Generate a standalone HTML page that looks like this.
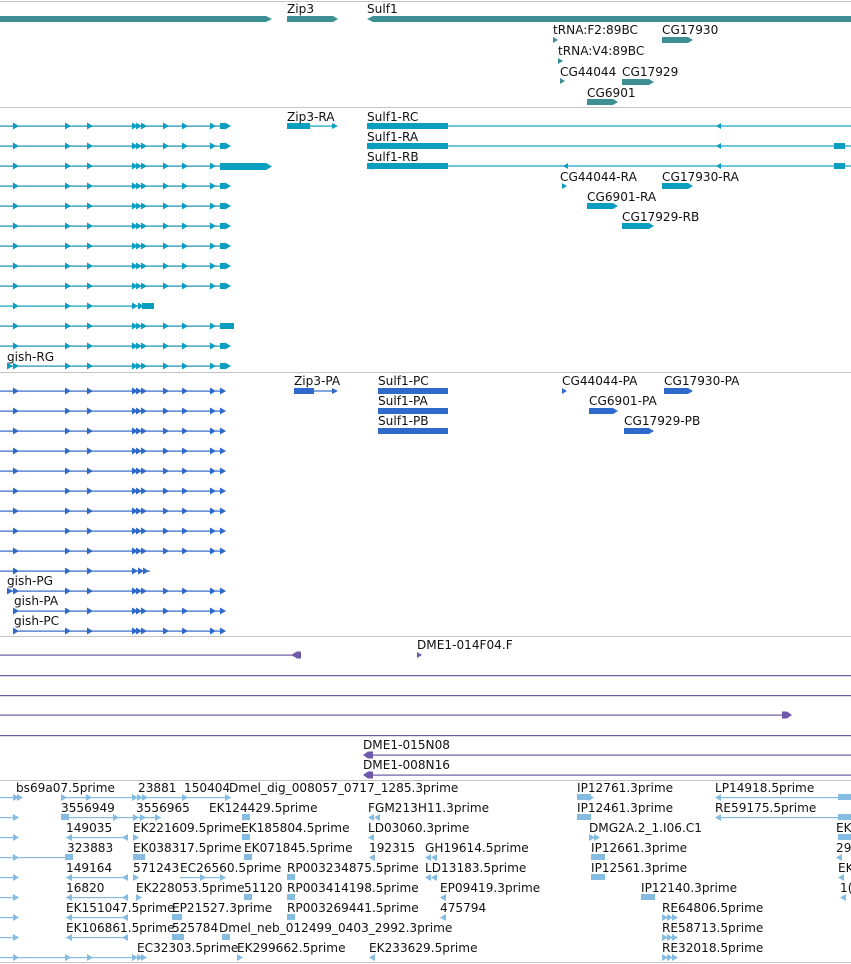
<!DOCTYPE html>
<html><head><meta charset="utf-8"><style>
html,body{margin:0;padding:0;background:#fff;width:851px;height:964px;overflow:hidden}
svg{display:block}
text{font-family:"DejaVu Sans","Liberation Sans",sans-serif;font-size:12.1px;fill:#111}
</style></head><body>
<svg width="851" height="964" viewBox="0 0 851 964" xmlns="http://www.w3.org/2000/svg">
<defs>
<path id="ar" d="M0,-3.5 L6,0 L0,3.5 Z"/>
<path id="al" d="M6,-3.5 L0,0 L6,3.5 Z"/>
<g id="tr" fill="#0a9ec0" stroke="none">
 <rect x="0" y="-0.5" width="228" height="1.2" fill="#1a8eb4"/>
 <use href="#ar" x="13"/><use href="#ar" x="65"/><use href="#ar" x="87"/>
 <use href="#ar" x="132"/><use href="#ar" x="136"/><use href="#ar" x="141"/>
 <use href="#ar" x="163"/><use href="#ar" x="182"/><use href="#ar" x="210"/>
 <rect x="220" y="-3" width="6" height="6"/><use href="#ar" x="225"/>
</g>
<g id="pr" fill="#2f6acb" stroke="none">
 <rect x="0" y="-0.5" width="225" height="1.2"/>
 <use href="#ar" x="13"/><use href="#ar" x="65"/><use href="#ar" x="87"/>
 <use href="#ar" x="132"/><use href="#ar" x="136"/><use href="#ar" x="141"/>
 <use href="#ar" x="163"/><use href="#ar" x="182"/><use href="#ar" x="210"/>
 <use href="#ar" x="220"/>
</g>
</defs>

<g fill="#c4c4c4">
<rect x="0" y="1" width="851" height="1"/>
<rect x="0" y="107" width="851" height="1"/>
<rect x="0" y="372" width="851" height="1"/>
<rect x="0" y="636" width="851" height="1"/>
<rect x="0" y="780" width="851" height="1"/>
<rect x="0" y="962" width="851" height="1"/>
</g>

<g fill="#3d8f94">
<rect x="0" y="16" width="266" height="6"/><path d="M266,16 L272,19 L266,22Z"/>
<rect x="287" y="16" width="46" height="6"/><path d="M333,16 L338,19 L333,22Z"/>
<rect x="373" y="16" width="478" height="6"/><path d="M373,16 L367,19 L373,22Z"/>
<path d="M553,37 L558,40 L553,43Z"/>
<rect x="662" y="37" width="26" height="6"/><path d="M688,37 L693,40 L688,43Z"/>
<path d="M558,58 L563,61 L558,64Z"/>
<path d="M560,78 L565,81 L560,84Z"/>
<rect x="622" y="79" width="27" height="6"/><path d="M649,79 L654,82 L649,85Z"/>
<rect x="587" y="99" width="26" height="6"/><path d="M613,99 L618,102 L613,105Z"/>
</g>
<text x="287" y="13">Zip3</text>
<text x="367" y="13">Sulf1</text>
<text x="553" y="34">tRNA:F2:89BC</text>
<text x="662" y="34">CG17930</text>
<text x="558" y="55">tRNA:V4:89BC</text>
<text x="560" y="76">CG44044</text>
<text x="622" y="76">CG17929</text>
<text x="587" y="97">CG6901</text>

<use href="#tr" y="126"/><use href="#tr" y="146"/><use href="#tr" y="166"/>
<use href="#tr" y="186"/><use href="#tr" y="206"/><use href="#tr" y="226"/>
<use href="#tr" y="246"/><use href="#tr" y="266"/>
<g fill="#0a9ec0">
<rect x="0" y="305.5" width="150" height="1.2"/>
<use href="#ar" x="13" y="306"/><use href="#ar" x="65" y="306"/><use href="#ar" x="87" y="306"/>
<use href="#ar" x="132" y="306"/><use href="#ar" x="138" y="306"/><rect x="142" y="303" width="12" height="6"/>
</g>
<use href="#tr" y="286"/>
<use href="#tr" y="326"/>
<g fill="#0a9ec0"><rect x="220" y="323" width="14" height="6"/></g>
<use href="#tr" y="346"/>
<use href="#tr" y="366"/>
<rect x="0" y="362" width="7" height="8" fill="#fff"/>
<g fill="#0a9ec0"><use href="#ar" x="7" y="366"/></g>
<g fill="#0a9ec0">
<rect x="220" y="163" width="46" height="7"/><path d="M266,163 L272,166.5 L266,170Z"/>
<rect x="287" y="123" width="23" height="6"/><rect x="310" y="125.5" width="25" height="1.2"/><path d="M332,123 L338,126 L332,129Z"/>
<g id="sulf">
<rect x="367" y="123" width="81" height="6"/>
<path d="M367,126 L373,122 L373,130Z"/>
<rect x="448" y="125.4" width="403" height="1.2"/>
</g>
<use href="#sulf" y="20"/><use href="#sulf" y="40"/>
<path d="M716,126 L721,123 L721,129Z"/>
<path d="M716,146 L721,143 L721,149Z"/><rect x="834" y="143" width="11" height="6"/>
<path d="M716,166 L721,163 L721,169Z"/><rect x="834" y="163" width="11" height="6"/><path d="M563,166 L568,163 L568,169Z"/>
<path d="M562,183 L567,186 L562,189Z"/>
<rect x="662" y="183" width="26" height="6"/><path d="M688,183 L693,186 L688,189Z"/>
<rect x="587" y="203" width="26" height="6"/><path d="M613,203 L618,206 L613,209Z"/>
<rect x="622" y="223" width="27" height="6"/><path d="M649,223 L654,226 L649,229Z"/>
</g>
<text x="287" y="121">Zip3-RA</text>
<text x="367" y="121">Sulf1-RC</text>
<text x="367" y="141">Sulf1-RA</text>
<text x="367" y="161">Sulf1-RB</text>
<text x="560" y="181">CG44044-RA</text>
<text x="662" y="181">CG17930-RA</text>
<text x="587" y="201">CG6901-RA</text>
<text x="622" y="221">CG17929-RB</text>
<text x="7" y="361">gish-RG</text>

<use href="#pr" y="391"/><use href="#pr" y="411"/><use href="#pr" y="431"/>
<use href="#pr" y="451"/><use href="#pr" y="471"/><use href="#pr" y="491"/>
<use href="#pr" y="511"/><use href="#pr" y="531"/><use href="#pr" y="551"/>
<g fill="#2f6acb">
<rect x="0" y="570.5" width="150" height="1.2"/>
<use href="#ar" x="13" y="571"/><use href="#ar" x="65" y="571"/><use href="#ar" x="87" y="571"/>
<use href="#ar" x="132" y="571"/><use href="#ar" x="138" y="571"/><use href="#ar" x="143" y="571"/>
</g>
<use href="#pr" y="591"/><use href="#pr" y="611"/><use href="#pr" y="631"/>
<rect x="0" y="587" width="7" height="8" fill="#fff"/>
<rect x="0" y="607" width="13" height="8" fill="#fff"/>
<rect x="0" y="627" width="13" height="8" fill="#fff"/>
<g fill="#2f6acb"><use href="#ar" x="7" y="591"/></g>
<g fill="#2f6acb">
<rect x="294" y="388" width="20" height="6"/><rect x="314" y="390.4" width="20" height="1.2"/><path d="M332,388 L338,391 L332,394Z"/>
<rect x="378" y="388" width="70" height="6"/>
<rect x="378" y="408" width="70" height="6"/>
<rect x="378" y="428" width="70" height="6"/>
<path d="M562,388 L567,391 L562,394Z"/>
<rect x="664" y="388" width="24" height="6"/><path d="M688,388 L693,391 L688,394Z"/>
<rect x="589" y="408" width="24" height="6"/><path d="M613,408 L618,411 L613,414Z"/>
<rect x="624" y="428" width="25" height="6"/><path d="M649,428 L654,431 L649,434Z"/>
</g>
<text x="294" y="385">Zip3-PA</text>
<text x="378" y="385">Sulf1-PC</text>
<text x="378" y="405">Sulf1-PA</text>
<text x="378" y="425">Sulf1-PB</text>
<text x="562" y="385">CG44044-PA</text>
<text x="664" y="385">CG17930-PA</text>
<text x="589" y="405">CG6901-PA</text>
<text x="624" y="425">CG17929-PB</text>
<text x="7" y="585">gish-PG</text>
<text x="14" y="605">gish-PA</text>
<text x="14" y="625">gish-PC</text>

<g fill="#6e58a8">
<rect x="0" y="654.5" width="295" height="1.2"/><path d="M291,655 L297,651.5 L301,651.5 L301,658.5 L297,658.5Z"/>
<path d="M417,652 L422,655 L417,658Z"/>
<rect x="0" y="675" width="851" height="1.2"/>
<rect x="0" y="695" width="851" height="1.2"/>
<rect x="0" y="714.5" width="784" height="1.2"/><path d="M782,711.5 L787,711.5 L792,715 L787,718.5 L782,718.5Z"/>
<rect x="0" y="735" width="851" height="1.2"/>
<rect x="365" y="754.5" width="486" height="1.2"/><path d="M363,755 L368,751.5 L373,751.5 L373,758.5 L368,758.5Z"/>
<rect x="365" y="774.5" width="486" height="1.2"/><path d="M363,775 L368,771.5 L373,771.5 L373,778.5 L368,778.5Z"/>
</g>
<text x="417" y="649">DME1-014F04.F</text>
<text x="363" y="749">DME1-015N08</text>
<text x="363" y="769">DME1-008N16</text>

<g fill="#84bce2">
<rect x="0" y="797" width="20" height="1.2"/><use href="#ar" x="13" y="797.5"/><use href="#ar" x="17" y="797.5"/>
<rect x="0" y="817" width="18" height="1.2"/><use href="#ar" x="13" y="817.5"/>
<rect x="0" y="837" width="18" height="1.2"/><use href="#ar" x="13" y="837.5"/>
<rect x="0" y="857" width="66" height="1.2"/><use href="#ar" x="13" y="857.5"/><rect x="65" y="854" width="8" height="6"/>
<rect x="0" y="877" width="18" height="1.2"/><use href="#ar" x="13" y="877.5"/>
<rect x="0" y="897" width="18" height="1.2"/><use href="#ar" x="13" y="897.5"/>
<rect x="0" y="917" width="18" height="1.2"/><use href="#ar" x="13" y="917.5"/>
<rect x="0" y="937" width="18" height="1.2"/><use href="#ar" x="13" y="937.5"/>
<rect x="0" y="957" width="145" height="1.2"/><use href="#ar" x="13" y="957.5"/><use href="#ar" x="65" y="957.5"/><use href="#ar" x="87" y="957.5"/><use href="#ar" x="132" y="957.5"/><use href="#ar" x="137" y="957.5"/><use href="#ar" x="141" y="957.5"/>
<rect x="61" y="797" width="170" height="1.2"/><use href="#ar" x="61" y="797.5"/><use href="#ar" x="86" y="797.5"/><use href="#ar" x="132" y="797.5"/><use href="#ar" x="137" y="797.5"/><use href="#ar" x="142" y="797.5"/><use href="#ar" x="182" y="797.5"/><use href="#ar" x="225" y="797.5"/>
<rect x="577" y="794" width="14" height="6"/><use href="#ar" x="588" y="797.5"/>
<rect x="720" y="797" width="131" height="1.2"/><use href="#al" x="715" y="797.5"/><rect x="838" y="794" width="13" height="6"/>
<rect x="61" y="817" width="100" height="1.2"/><rect x="61" y="814" width="8" height="6"/><use href="#ar" x="113" y="817.5"/><use href="#ar" x="133" y="817.5"/><use href="#ar" x="140" y="817.5"/><use href="#ar" x="155" y="817.5"/>
<rect x="242" y="814" width="8" height="6"/>
<use href="#al" x="368" y="817.5"/><use href="#al" x="374" y="817.5"/>
<rect x="577" y="814" width="14" height="6"/>
<rect x="720" y="817" width="131" height="1.2"/><use href="#al" x="715" y="817.5"/><rect x="838" y="814" width="13" height="6"/>
<rect x="66" y="837" width="62" height="1.2"/><use href="#al" x="66" y="837.5"/><use href="#al" x="122" y="837.5"/><use href="#ar" x="133" y="837.5"/>
<rect x="242" y="834" width="8" height="6"/><use href="#al" x="368" y="837.5"/>
<use href="#ar" x="589" y="837.5"/><use href="#ar" x="594" y="837.5"/>
<rect x="838" y="834" width="13" height="6"/>
<rect x="133" y="854" width="12" height="6"/><rect x="244" y="854" width="8" height="6"/>
<use href="#al" x="425" y="857.5"/><use href="#al" x="431" y="857.5"/><use href="#al" x="369" y="857.5"/>
<rect x="591" y="854" width="14" height="6"/><use href="#al" x="836" y="857.5"/>
<rect x="66" y="877" width="62" height="1.2"/><use href="#al" x="66" y="877.5"/><use href="#al" x="122" y="877.5"/><use href="#ar" x="133" y="877.5"/>
<rect x="180" y="877" width="45" height="1.2"/><use href="#ar" x="200" y="877.5"/><use href="#ar" x="220" y="877.5"/>
<rect x="287" y="874" width="8" height="6"/>
<use href="#al" x="425" y="877.5"/><use href="#al" x="431" y="877.5"/>
<rect x="591" y="874" width="14" height="6"/><use href="#al" x="838" y="877.5"/>
<rect x="66" y="897" width="62" height="1.2"/><use href="#al" x="66" y="897.5"/><use href="#al" x="122" y="897.5"/><use href="#ar" x="136" y="897.5"/>
<rect x="244" y="894" width="8" height="6"/><rect x="287" y="894" width="8" height="6"/>
<use href="#al" x="440" y="897.5"/><rect x="641" y="894" width="14" height="6"/><use href="#al" x="840" y="897.5"/>
<rect x="66" y="917" width="62" height="1.2"/><use href="#al" x="66" y="917.5"/><use href="#al" x="122" y="917.5"/>
<rect x="172" y="914" width="10" height="6"/><rect x="287" y="914" width="8" height="6"/>
<use href="#al" x="440" y="917.5"/><use href="#ar" x="662" y="917.5"/><use href="#ar" x="667" y="917.5"/><use href="#ar" x="672" y="917.5"/>
<rect x="66" y="937" width="62" height="1.2"/><use href="#al" x="66" y="937.5"/><use href="#al" x="122" y="937.5"/>
<rect x="172" y="934" width="12" height="6"/><rect x="222" y="934" width="8" height="6"/>
<use href="#ar" x="662" y="937.5"/><use href="#ar" x="667" y="937.5"/><use href="#ar" x="672" y="937.5"/>
<use href="#ar" x="237" y="957.5"/><use href="#al" x="369" y="957.5"/>
<use href="#ar" x="662" y="957.5"/><use href="#ar" x="667" y="957.5"/><use href="#ar" x="672" y="957.5"/>
</g>
<text x="16" y="792">bs69a07.5prime</text><text x="138" y="792">23881</text><text x="184" y="792">150404</text><text x="229" y="792">Dmel_dig_008057_0717_1285.3prime</text><text x="577" y="792">IP12761.3prime</text><text x="715" y="792">LP14918.5prime</text>
<text x="61" y="812">3556949</text><text x="136" y="812">3556965</text><text x="209" y="812">EK124429.5prime</text><text x="368" y="812">FGM213H11.3prime</text><text x="577" y="812">IP12461.3prime</text><text x="715" y="812">RE59175.5prime</text>
<text x="66" y="832">149035</text><text x="133" y="832">EK221609.5prime</text><text x="241" y="832">EK185804.5prime</text><text x="368" y="832">LD03060.3prime</text><text x="589" y="832">DMG2A.2_1.I06.C1</text><text x="836" y="832">EK</text>
<text x="67" y="852">323883</text><text x="133" y="852">EK038317.5prime</text><text x="244" y="852">EK071845.5prime</text><text x="369" y="852">192315</text><text x="425" y="852">GH19614.5prime</text><text x="591" y="852">IP12661.3prime</text><text x="836" y="852">29</text>
<text x="66" y="872">149164</text><text x="133" y="872">571243</text><text x="180" y="872">EC26560.5prime</text><text x="287" y="872">RP003234875.5prime</text><text x="425" y="872">LD13183.5prime</text><text x="591" y="872">IP12561.3prime</text><text x="838" y="872">EK</text>
<text x="66" y="892">16820</text><text x="136" y="892">EK228053.5prime</text><text x="244" y="892">51120</text><text x="287" y="892">RP003414198.5prime</text><text x="440" y="892">EP09419.3prime</text><text x="641" y="892">IP12140.3prime</text><text x="840" y="892">1(</text>
<text x="66" y="912">EK151047.5prime</text><text x="172" y="912">EP21527.3prime</text><text x="287" y="912">RP003269441.5prime</text><text x="440" y="912">475794</text><text x="662" y="912">RE64806.5prime</text>
<text x="66" y="932">EK106861.5prime</text><text x="172" y="932">525784</text><text x="219" y="932">Dmel_neb_012499_0403_2992.3prime</text><text x="662" y="932">RE58713.5prime</text>
<text x="137" y="952">EC32303.5prime</text><text x="237" y="952">EK299662.5prime</text><text x="369" y="952">EK233629.5prime</text><text x="662" y="952">RE32018.5prime</text>
</svg>
</body></html>
